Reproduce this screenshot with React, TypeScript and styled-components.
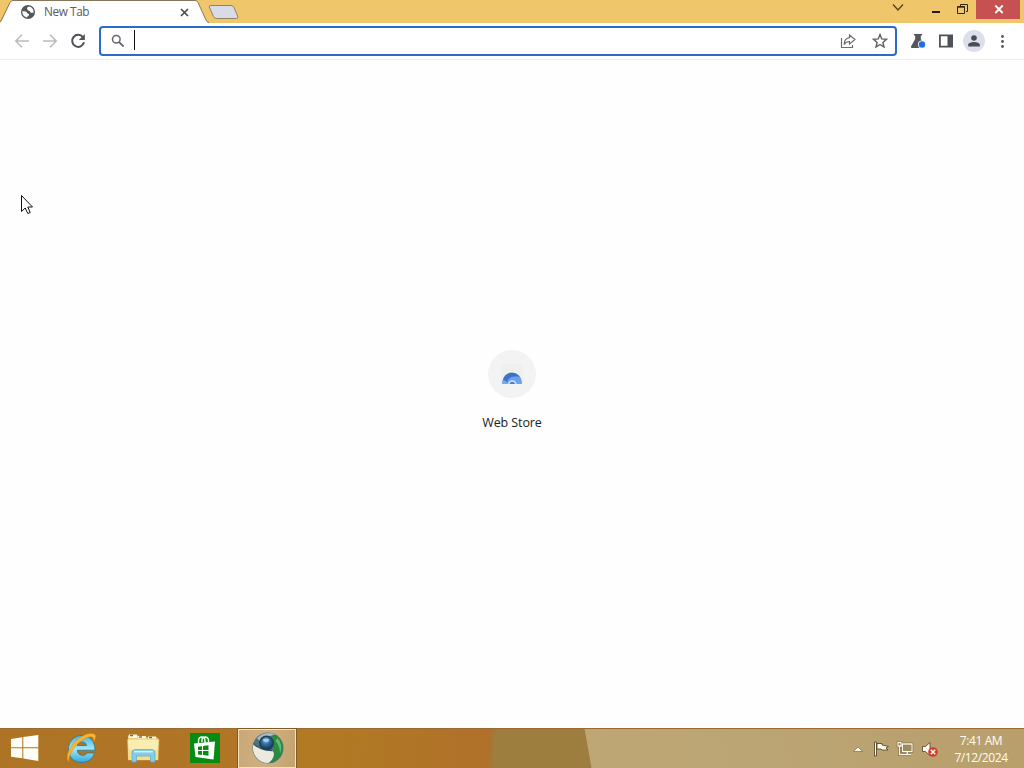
import React from 'react';
import styled, { createGlobalStyle } from 'styled-components';

const GlobalStyle = createGlobalStyle`
	* {
		box-sizing: border-box;
	}
	body {
		margin: 0;
		overflow: hidden;
		font-family: 'Open Sans', 'Noto Sans', sans-serif;
	}
	svg {
		display: block;
		flex-shrink: 0;
	}
`;

const Desktop = styled.div`
	position: relative;
	display: flex;
	flex-direction: column;
	width: 1024px;
	height: 768px;
	background: #fefefe;
`;

const TitleBar = styled.div`
	display: flex;
	height: 23px;
	background: #f0c66a;
`;

const Tab = styled.div`
	position: relative;
	display: flex;
	align-items: center;
	width: 209px;
	height: 23px;
	padding: 1px 19px 0 20px;
`;

const TabShape = styled.svg`
	position: absolute;
	left: 0;
	top: 0;
`;

const TabIcon = styled.svg`
	position: relative;
`;

const TabTitle = styled.span`
	position: relative;
	flex: 1;
	margin-left: 8px;
	padding-bottom: 2px;
	color: #5a5a60;
	font-size: 11.8px;
	line-height: 20px;
	letter-spacing: -0.4px;
`;

const NewTab = styled.svg`
	margin-top: 4px;
	margin-left: -1px;
`;

const WindowButtons = styled.div`
	display: flex;
	margin-left: auto;
`;

const WindowButton = styled.div<{ width: number; close?: boolean }>`
	display: flex;
	justify-content: center;
	width: ${({ width }) => width}px;
	height: 19px;
	padding-left: ${({ close }) => (close ? '1px' : '0')};
	background: ${({ close }) => (close ? '#c75050' : 'transparent')};
`;

const Edge = styled.div`
	width: 4px;
`;

const Toolbar = styled.div`
	display: flex;
	align-items: center;
	height: 37px;
	padding: 0 12px 0 13px;
	background: #fff;
	border-bottom: 1px solid #eceef0;
`;

const NavButtons = styled.div`
	display: flex;
	gap: 10px;
	width: 86px;
`;

const Omnibox = styled.div`
	display: flex;
	align-items: center;
	width: 798px;
	height: 30px;
	padding: 0 6px 0 9px;
	border: 2px solid #2b6bc9;
	border-radius: 4px;
`;

const Caret = styled.div`
	width: 1px;
	height: 20px;
	margin-left: 8px;
	margin-top: -2px;
	background: #111;
`;

const OmniboxActions = styled.div`
	display: flex;
	gap: 14px;
	margin-left: auto;
`;

const Extensions = styled.div`
	display: flex;
	align-items: center;
	flex: 1;
	gap: 10px;
	padding-left: 12px;
`;

const Avatar = styled.div`
	display: flex;
	align-items: center;
	justify-content: center;
	width: 22px;
	height: 22px;
	margin: 0 -2px;
	border-radius: 50%;
	background: #dddfea;
`;

const Page = styled.main`
	display: flex;
	flex-direction: column;
	align-items: center;
	flex: 1;
	padding-top: 290px;
`;

const ShortcutIcon = styled.div`
	display: flex;
	align-items: center;
	justify-content: center;
	width: 48px;
	height: 48px;
	border-radius: 50%;
	background: #f3f3f3;
`;

const ShortcutTitle = styled.div`
	margin-top: 15px;
	color: #202124;
	font-size: 12.5px;
	line-height: 20px;
	letter-spacing: -0.1px;
`;

const Cursor = styled.svg`
	position: absolute;
	left: 20px;
	top: 194px;
`;

const Taskbar = styled.footer`
	display: flex;
	height: 40px;
	border-top: 1px solid #9b6a34;
	background: linear-gradient(80deg, transparent 582px, #bfa674 583px, #bca575 720px, #b89f6c 1015px),
		linear-gradient(
			93deg,
			#ae7426 0,
			#b07525 235px,
			#b27a22 310px,
			#b07627 400px,
			#b07029 489px,
			#9d7e3e 495px,
			#9e7d40 100%
		);
`;

const TaskItem = styled.div<{ width: number; active?: boolean }>`
	display: flex;
	align-items: center;
	justify-content: center;
	width: ${({ width }) => width}px;
	height: 39px;
	padding-bottom: 2px;
	${({ active }) =>
		active &&
		`
		margin-left: 2px;
		padding-left: 2px;
		background: linear-gradient(100deg, #c9a779, #d0b082 50%, #c2a36e);
		border: 1px solid #f4e3bd;
		outline: 1px solid #805a28;
	`}
`;

const Tray = styled.div`
	display: flex;
	align-items: center;
	margin-left: auto;
	padding-right: 16px;
`;

const TrayIcons = styled.div`
	display: flex;
	align-items: center;
	gap: 7px;
`;

const Clock = styled.div`
	width: 54px;
	margin-left: 15px;
	color: #fffdf4;
	font-size: 12px;
	line-height: 17px;
	letter-spacing: -0.4px;
	text-align: center;
	white-space: nowrap;
`;

function BrowserTab() {
	return (
		<Tab>
			<TabShape width="209" height="23" viewBox="0 0 209 23">
				<path d="M0 23 L1.5 21 L10 2.5 Q11 .5 13 .5 H195 Q197 .5 198 2.5 L206 20 Q207 22.5 209 23 Z" fill="#fefefe" />
				<path
					d="M0 22 L1.5 20 L10 2.5 Q11 .5 13 .5 H195 Q197 .5 198 2.5 L206 20 Q207 22.5 209 22.5"
					fill="none"
					stroke="#85765a"
				/>
			</TabShape>
			<TabIcon width="16" height="16" viewBox="0 0 24 24">
				<circle cx="12" cy="12" r="10.5" fill="#53565a" />
				<path
					d="M3.5 11c3.5-.2 5 0 6.500 1.500s1.500 2.500 3.500 2.500v2c-1 1-2.500 1-2.500 3.300C6.500 20 3 16 3.500 11zM13 3.700c-1 1-2.500.8-2.500 3.300 1.500 1 .5 3 3 3 2 0 1.500 3 3.500 3h3.300C21 8 17.500 4 13 3.700z"
					fill="#fff"
				/>
			</TabIcon>
			<TabTitle>New Tab</TabTitle>
			<TabIcon width="11" height="11" viewBox="0 0 11 11">
				<path d="M2 2 L9 9 M9 2 L2 9" stroke="#45484c" strokeWidth="1.6" />
			</TabIcon>
		</Tab>
	);
}

function WindowControls() {
	return (
		<WindowButtons>
			<WindowButton width={48}>
				<svg width="12" height="16" viewBox="0 0 12 16">
					<path d="M1 4.500 L6 10 L11 4.500" fill="none" stroke="#54401c" strokeWidth="1.3" />
				</svg>
			</WindowButton>
			<WindowButton width={28}>
				<svg width="10" height="16" viewBox="0 0 10 16">
					<path d="M1 12 H9" stroke="#251b0c" strokeWidth="2" />
				</svg>
			</WindowButton>
			<WindowButton width={26}>
				<svg width="14" height="16" viewBox="0 0 14 16">
					<path d="M4.500 6 V4.500 H11.500 V11.500 H10" fill="none" stroke="#32250f" />
					<path d="M1.500 6.500 H8.500 V13.500 H1.500 Z M1.500 7.200 H8.500" fill="none" stroke="#32250f" />
				</svg>
			</WindowButton>
			<WindowButton width={44} close>
				<svg width="10" height="16" viewBox="0 0 10 16">
					<path d="M1.300 5.500 L8.700 13 M8.700 5.500 L1.300 13" stroke="#fff" strokeWidth="1.8" />
				</svg>
			</WindowButton>
			<Edge />
		</WindowButtons>
	);
}

function BrowserToolbar() {
	return (
		<Toolbar>
			<NavButtons>
				<svg width="18" height="18" viewBox="0 0 18 18" fill="none" stroke="#b9bbbe" strokeWidth="1.6">
					<path d="M16 9 H3 M9 2.800 L2.800 9 L9 15.200" />
				</svg>
				<svg width="18" height="18" viewBox="0 0 18 18" fill="none" stroke="#b9bbbe" strokeWidth="1.6">
					<path d="M2 9 H15 M9 2.800 L15.200 9 L9 15.200" />
				</svg>
				<svg width="18" height="18" viewBox="0 0 18 18">
					<path d="M14 5.300 A6 6 0 1 0 15 10.300" fill="none" stroke="#505357" strokeWidth="2" />
					<path d="M15.800 2 V8 H9.800 Z" fill="#505357" />
				</svg>
			</NavButtons>
			<Omnibox>
				<svg width="16" height="16" viewBox="0 0 16 16" fill="none" stroke="#65686c" strokeWidth="1.500">
					<circle cx="6.300" cy="6.300" r="3.800" />
					<path d="M9 9 L13.700 13.700" strokeWidth="1.800" />
				</svg>
				<Caret />
				<OmniboxActions>
					<svg width="18" height="18" viewBox="0 0 18 18" fill="none" stroke="#6a6d71" strokeWidth="1.200">
						<path d="M2.500 6 V15.500 H13.500 V13" />
						<path d="M10.500 3 L16 7.500 L10.500 12 V9.500 C8 9.500 6.300 10.500 5 12.500 C5.300 8.500 7 6 10.500 5.600 Z" />
					</svg>
					<svg width="18" height="18" viewBox="0 0 18 18" fill="none" stroke="#5a5d61" strokeWidth="1.400">
						<path d="M9 2.600 L10.800 6.900 L15.500 7.300 L11.900 10.400 L13 15 L9 12.500 L5 15 L6.100 10.400 L2.500 7.300 L7.200 6.900 Z" />
					</svg>
				</OmniboxActions>
			</Omnibox>
			<Extensions>
				<svg width="18" height="18" viewBox="0 0 18 18">
					<path d="M5 2 H13 V3.500 H11.800 V7 L16 14.500 Q16.300 16 15 16 H3 Q1.700 16 2 14.500 L6.200 7 V3.500 H5 Z" fill="#53565b" />
					<circle cx="13" cy="12.500" r="4" fill="#fff" />
					<circle cx="13" cy="12.500" r="3.200" fill="#1f6fe5" />
				</svg>
				<svg width="18" height="18" viewBox="0 0 18 18">
					<path d="M2 2.500 H16 V15.500 H2 Z M3.800 4.300 V13.700 H10.500 V4.300 Z" fill="#4e5155" fillRule="evenodd" />
				</svg>
				<Avatar>
					<svg width="14" height="14" viewBox="0 0 14 14" fill="#494c59">
						<circle cx="7" cy="4" r="2.800" />
						<path d="M1.200 12.500 V10.800 C1.200 8.800 5 8 7 8 C9 8 12.800 8.800 12.800 10.800 V12.500 Z" />
					</svg>
				</Avatar>
				<svg width="18" height="18" viewBox="0 0 18 18" fill="#54575b">
					<circle cx="9.500" cy="4.500" r="1.400" />
					<circle cx="9.500" cy="9.500" r="1.400" />
					<circle cx="9.500" cy="14.500" r="1.400" />
				</svg>
			</Extensions>
		</Toolbar>
	);
}

function WebStoreIcon() {
	return (
		<svg width="24" height="24" viewBox="0 0 24 24">
			<path d="M1 2 H23 V22 H1 Z" fill="#efefeb" />
			<path d="M2.500 22 V20 A9.500 9.500 0 0 1 21.500 20 V22 Z" fill="#3d72c9" />
			<path d="M7 22 C7 16 12 13.500 19.500 15 L21.500 18 V22 Z" fill="#6fa0ea" />
			<path d="M2.500 22 V18 C5 18 7 20 8 22 Z" fill="#79a9ed" />
			<path d="M8 22 A4.300 4.300 0 0 1 16.500 22 Z" fill="#cfe0f8" />
			<path d="M9.500 22 A2.800 2.800 0 0 1 15 22 Z" fill="#4b80d8" />
		</svg>
	);
}

function StartIcon() {
	return (
		<svg width="28" height="28" viewBox="0 0 28 28" fill="#fffef6">
			<path d="M0 5 L11.300 3.300 V13.300 H0 Z M12.300 3.100 L27.300 1 V13.300 H12.300 Z M0 14.300 H11.300 V24.300 L0 22.700 Z M12.300 14.300 H27.300 V27 L12.300 24.600 Z" />
		</svg>
	);
}

function ExplorerIcon() {
	return (
		<svg width="32" height="32" viewBox="0 0 32 32">
			<defs>
				<linearGradient id="ie" x1="0" y1="0" x2="0" y2="1">
					<stop offset="0" stopColor="#47b5de" />
					<stop offset=".5" stopColor="#a1e8f8" />
					<stop offset="1" stopColor="#33a6d9" />
				</linearGradient>
			</defs>
			<path
				d="M16.800 3.500 C24.500 3.500 30 9 30 18.200 H12.300 C12.500 24 20 24.800 22 21 H29.500 C27.500 27.500 22.500 30.500 16.800 30.500 C9 30.500 3.500 25.500 3.500 17.300 C3.500 9.500 9 3.500 16.800 3.500 Z M12.400 13.500 H21.500 C21 8.800 13 8.800 12.400 13.500 Z"
				fill="url(#ie)"
				stroke="#21799f"
				strokeWidth=".8"
				fillRule="evenodd"
			/>
			<path
				d="M4 30 C-1.500 24 7 10.500 16 5 C23 .5 29.500 .5 30.500 3.500 C31 5.200 30 8 28.500 10 C29.500 5 27 3.500 22 5.500 C12 9.500 2.500 22.500 4 30 Z"
				fill="#f9b52d"
				stroke="#d98b1a"
				strokeWidth=".5"
			/>
		</svg>
	);
}

function FolderIcon() {
	return (
		<svg width="34" height="32" viewBox="0 0 34 32">
			<path d="M2 3.500 H12 L14 5.500 H31 Q32 5.500 32 7 V27 H2 Z" fill="#ecd38c" />
			<path d="M3 2.500 H11 V6 H3 Z M12 4 H20 V8 H12 Z M22 4.500 H30 V8 H22 Z" fill="#fff8d9" />
			<path d="M4 3.500 H7 M23 5.500 H26" stroke="#4a7b48" strokeWidth="1.500" />
			<path d="M13 5 H16" stroke="#b5603e" strokeWidth="1.500" />
			<path d="M1.500 8 Q1.500 7 3 7 H32 Q33 7 33 8 L32 28 H2.500 Z" fill="#f9edb2" stroke="#d9b35a" strokeWidth=".6" />
			<path d="M2.500 18 H32 V28 H2.500 Z" fill="#f2de90" />
			<path d="M6 30 V21 Q6 17.500 9 17.500 H26 Q29 17.500 29 21 V30 H24.500 V24 H10.500 V30 Z" fill="#84cdea" stroke="#5aa9cb" strokeWidth=".7" />
			<path d="M8 19.700 H27" stroke="#d0f2fb" strokeWidth="1.500" />
		</svg>
	);
}

function StoreIcon() {
	return (
		<svg width="30" height="30" viewBox="0 0 30 30">
			<path d="M0 0 H30 V30 H0 Z" fill="#078c13" />
			<path d="M8.500 11 V8 Q8.500 4 12 4 Q15 4 15 8 V10 M12 9 V7 Q12 4 15.500 4 Q19 4.500 18.500 9" fill="none" stroke="#f4fff0" strokeWidth="1.400" />
			<path d="M4 10.500 L25 8.500 L23.500 26.500 L5.500 24 Z" fill="#fff" />
			<path d="M8 13.700 L12 13.200 V17 H8 Z M13 13 L18.500 12.300 V17 H13 Z M8 18 H12 V22 L8 21.500 Z M13 18 H18.500 V22.800 L13 22.100 Z" fill="#078c13" />
		</svg>
	);
}

function ChromiumIcon() {
	return (
		<svg width="32" height="32" viewBox="0 0 32 32">
			<defs>
				<radialGradient id="eye" cx=".45" cy=".3" r=".8">
					<stop offset="0" stopColor="#7fb0d6" />
					<stop offset=".45" stopColor="#2f6799" />
					<stop offset="1" stopColor="#0c2c52" />
				</radialGradient>
			</defs>
			<circle cx="16" cy="16" r="15.500" fill="#50737f" />
			<path d="M5 6.500 A15 15 0 0 1 23 2.300 L17 4.500 L8 9 Z" fill="#a5bcc3" />
			<path d="M20 4 L24 3 A15.300 15.300 0 0 1 18 31 L22 21 Z" fill="#2c8b43" />
			<path d="M25.500 6 A14 14 0 0 1 28 21.500 Q28 14 23.500 9 Z" fill="#62ba78" />
			<path d="M1.500 12 Q3 13.500 7 15.500 Q12 18 20 18.500 L22 21 Q22 27 16.500 31 A15 15 0 0 1 1.500 12 Z" fill="#eceadf" />
			<path d="M1.500 11.500 Q3 14 7 15.500 Q11 18 20 18.500" fill="none" stroke="#2f5260" strokeWidth="1.300" />
			<circle cx="14.500" cy="11" r="7.500" fill="#1d4257" />
			<circle cx="14.500" cy="11" r="6" fill="url(#eye)" />
			<ellipse cx="14" cy="8.200" rx="3" ry="1.700" fill="#a8cde5" />
		</svg>
	);
}

function SystemTray() {
	return (
		<Tray>
			<TrayIcons>
				<svg width="14" height="16" viewBox="0 0 14 16">
					<path d="M2.500 10.500 L7 6 L11.500 10.500 Z" fill="#fff9eb" stroke="#82654b" strokeWidth=".7" />
				</svg>
				<svg width="17" height="18" viewBox="0 0 17 18">
					<path d="M2.500 2 H4.500 V16 H2.500 Z M5 3.500 H10 V5 L16.500 6.500 L14 8 L16 10 H10 L9 9 H5 Z" fill="#fffdf2" stroke="#49391f" strokeWidth=".8" />
				</svg>
				<svg width="18" height="18" viewBox="0 0 18 18" fill="none">
					<path d="M6.500 4 H16 V11.500 H6.500 Z M11.300 12 V14 M8 14.500 H15 M3.500 5.500 V14.500 H8 M2 2.500 H5 V6 H2 Z" stroke="#6a5634" strokeWidth="2.400" />
					<path d="M6.500 4 H16 V11.500 H6.500 Z M11.300 12 V14 M8 14.500 H15 M3.500 5.500 V14.500 H8 M2 2.500 H5 V6 H2 Z" stroke="#fff8e6" strokeWidth="1.300" />
					<path d="M7.500 5 H15 V10.500 H7.500 Z" fill="#a08a60" />
				</svg>
				<svg width="18" height="18" viewBox="0 0 18 18">
					<path d="M1.500 6.500 H4.500 L9 2.500 V15.500 L4.500 11.500 H1.500 Z" fill="#fffdf2" stroke="#51402a" strokeWidth=".8" />
					<circle cx="12" cy="12" r="4.800" fill="#d13d2b" />
					<path d="M9.800 9.800 L14.200 14.200 M14.200 9.800 L9.800 14.200" stroke="#fff" strokeWidth="1.500" />
				</svg>
			</TrayIcons>
			<Clock>
				<div>7:41 AM</div>
				<div>7/12/2024</div>
			</Clock>
		</Tray>
	);
}

function App() {
	return (
		<Desktop>
			<GlobalStyle />
			<TitleBar>
				<BrowserTab />
				<NewTab width="31" height="17" viewBox="0 0 31 17">
					<path d="M2.500 1.500 H23 Q25 1.500 26 3.500 L30 13 Q30 14.500 28.500 14.500 H8.500 Q6.500 14.500 5.500 12.500 L1.300 3 Q1 1.500 2.500 1.500 Z" fill="#d8dce8" stroke="#92805f" />
				</NewTab>
				<WindowControls />
			</TitleBar>
			<BrowserToolbar />
			<Page>
				<ShortcutIcon>
					<WebStoreIcon />
				</ShortcutIcon>
				<ShortcutTitle>Web Store</ShortcutTitle>
			</Page>
			<Taskbar>
				<TaskItem width={50}>
					<StartIcon />
				</TaskItem>
				<TaskItem width={62}>
					<ExplorerIcon />
				</TaskItem>
				<TaskItem width={62}>
					<FolderIcon />
				</TaskItem>
				<TaskItem width={62}>
					<StoreIcon />
				</TaskItem>
				<TaskItem width={58} active>
					<ChromiumIcon />
				</TaskItem>
				<SystemTray />
			</Taskbar>
			<Cursor width="14" height="22" viewBox="0 0 14 22">
				<path d="M1.500 1.500 V17.500 L5.200 14 L7.800 19.500 L10.200 18.500 L7.800 13 H12.500 Z" fill="#fff" stroke="#111" />
			</Cursor>
		</Desktop>
	);
}

export default App;
